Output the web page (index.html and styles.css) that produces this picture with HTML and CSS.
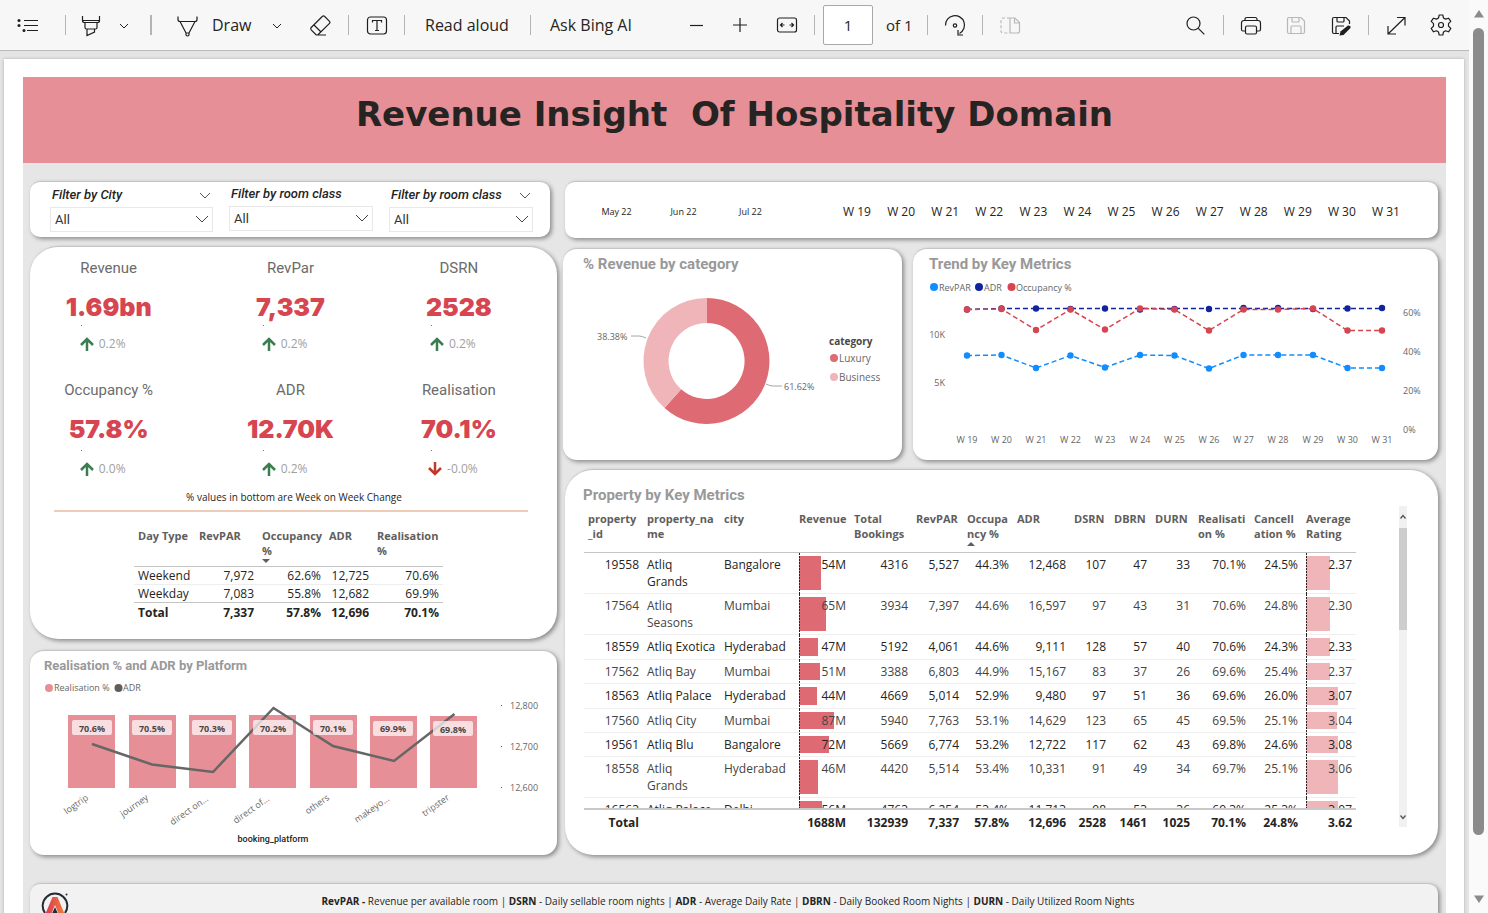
FILE: index.html
```html
<!DOCTYPE html>
<html lang="en">
<head>
<meta charset="utf-8">
<title>Revenue Insight Of Hospitality Domain</title>
<link rel="stylesheet" href="styles.css">
</head>
<body>
<div class="app">
<div class="viewer">
<header class="toolbar">
  <div class="tools">
    <button class="tool" aria-label="Contents"><svg viewBox="0 0 24 24"><path d="M8 7.500h14M8 12.500h14M11 17.500h11"/><g class="solid"><circle cx="3" cy="7.500" r="1.500"/><circle cx="3" cy="12.500" r="1.500"/><circle cx="8" cy="17.500" r="1.500"/></g></svg></button>
    <span class="sep g25"></span>
    <button class="tool g13" aria-label="Highlight"><svg viewBox="0 0 24 24"><path d="M3.500 3v4.500q0 2 2 2h13q2 0 2-2V3M3.500 7.500h17M6 10v4.500q0 1.500 1.500 1.500h9q1.500 0 1.500-1.500V10M8 16v6.500l7.500-3.500v-3"/></svg></button>
    <button class="tool small g15" aria-label="Highlight options"><svg viewBox="0 0 12 12"><path d="M2 5l4 4 4-4"/></svg></button>
    <span class="sep wide g20"></span>
    <button class="tool g23" aria-label="Pen"><svg viewBox="0 0 24 24"><path d="M3 3.500v3q0 2 2 2h15q2 0 2-2v-3M5 8.500l6 11.500h3l6-11.500M11 20v2q1.500 2 3 0v-2"/></svg></button>
    <button class="text-tool draw g13">Draw</button>
    <button class="tool small g19" aria-label="Draw options"><svg viewBox="0 0 12 12"><path d="M2 5l4 4 4-4"/></svg></button>
    <button class="tool g25" aria-label="Erase"><svg viewBox="0 0 24 24"><path d="M3.200 14.500L14.500 3.300q1-.8 2 0l5 5q1 1 0 2L10.200 21.500q-1.200 1-2.400 0l-4.600-4.600q-1-1.200 0-2.400zM6 12l7 7M9 22h9"/></svg></button>
    <span class="sep g16"></span>
    <button class="tool g16" aria-label="Add text"><svg viewBox="0 0 24 24"><rect x="2.500" y="4" width="19" height="17" rx="3"/><path d="M7.500 9.500V7.500h9v2M12 7.500v10M10 17.500h4"/></svg></button>
    <span class="sep g15"></span>
    <button class="text-tool read g20">Read aloud</button>
    <span class="sep g19"></span>
    <button class="text-tool ask g19">Ask Bing AI</button>
    <button class="tool g46" aria-label="Zoom out"><svg viewBox="0 0 24 24"><path d="M6 12.500h13"/></svg></button>
    <button class="tool g20" aria-label="Zoom in"><svg viewBox="0 0 24 24"><path d="M5 12h14M12 5v14"/></svg></button>
    <button class="tool g23" aria-label="Fit to width"><svg viewBox="0 0 24 24"><rect x="2.500" y="5" width="19" height="14" rx="2"/><path d="M9.500 12H5.500M7.500 10l-2 2 2 2M14.500 12h4M16.500 10l2 2-2 2"/></svg></button>
    <span class="sep g15"></span>
    <input class="page-input g8" type="text" value="1" aria-label="Page number">
    <span class="page-count g13">of 1</span>
    <span class="sep g15"></span>
    <button class="tool g15" aria-label="Rotate"><svg viewBox="0 0 24 24"><path d="M2.500 12.500a9.500 9.500 0 1 1 14 8M15 17v5h5"/><circle cx="12" cy="12.500" r="1.700"/></svg></button>
    <span class="sep g15"></span>
    <button class="tool muted g15" aria-label="Page view" disabled><svg viewBox="0 0 24 24"><path d="M12 5v15M12 5h5l4.500 4.500V18q0 2-2 2H12M16.500 5v5h5"/><path stroke-dasharray="3 2" d="M12 5H5Q3 5 3 7v11q0 2 2 2h7"/></svg></button>
  </div>
  <div class="tools">
    <button class="tool" aria-label="Find"><svg viewBox="0 0 24 24"><circle cx="10.500" cy="10.500" r="6.500"/><path d="M15.300 15.300l6 6"/></svg></button>
    <span class="sep g16"></span>
    <button class="tool g15" aria-label="Print"><svg viewBox="0 0 24 24"><path d="M7 18H4q-1.500 0-1.500-1.500V10q0-2.500 2.500-2.500h14q2.500 0 2.500 2.500v6.500Q21.500 18 20 18h-3M6 7.500V6.500q0-2 2-2h8q2 0 2 2v1"/><rect x="6.500" y="13" width="11" height="8" rx="1.500"/></svg></button>
    <button class="tool muted g21" aria-label="Save" disabled><svg viewBox="0 0 24 24"><path d="M3.500 6q0-1.500 1.500-1.500h12l3.500 3.500v11q0 1.500-1.500 1.500H5q-1.500 0-1.500-1.500zM8 4.500V8q0 1 1 1h5q1 0 1-1V4.500M7 20.500V14q0-1 1-1h8q1 0 1 1v6.500"/></svg></button>
    <button class="tool g21" aria-label="Save as"><svg viewBox="0 0 24 24"><path d="M10 20.500H5q-1.500 0-1.500-1.500V6q0-1.500 1.500-1.500h12l3.500 3.500v3M8 4.500V8q0 1 1 1h5q1 0 1-1V4.500M7 20.500V14q0-1 1-1h7"/><path class="solid" d="M10.500 22.500l1-4 7.500-6q3-.5 2.500 2.500l-7 7z"/></svg></button>
    <span class="sep g15"></span>
    <button class="tool g15" aria-label="Full screen"><svg viewBox="0 0 24 24"><path d="M4 21L21 4.500M13 4.500h8v8M4 13v8h8"/></svg></button>
    <button class="tool g21" aria-label="Settings"><svg viewBox="0 0 24 24"><path stroke-linejoin="round" d="M10.200 2h3.600l.7 3 2 1.100 3-.9 2.300 3.200-2.300 2.200v2.600l2.300 2.300-2.300 3.300-3-1-2 1.200-.7 3h-3.600l-.7-3-2-1.200-3 1-2.300-3.300 2.300-2.300v-2.600L2.200 8.400l2.300-3.200 3 .9 2-1.100z"/><circle cx="12" cy="12" r="2.500"/></svg></button>
  </div>
</header>

<div class="canvas">
<div class="page">
<main class="dashboard">
  <h1 class="banner">Revenue Insight&nbsp; Of Hospitality Domain</h1>
  <div class="board">
    <div class="column left">
      <section class="card filters">
        <div class="filter">
          <div class="filter-head"><label for="city">Filter by City</label><svg class="chev" viewBox="0 0 12 12"><path d="M1 4l5 5 5-5"/></svg></div>
          <div class="pick"><select id="city"><option>All</option></select><svg class="pick-chev" viewBox="0 0 14 14"><path d="M1 4l6 6 6-6"/></svg></div>
        </div>
        <div class="filter raised">
          <div class="filter-head"><label for="room1">Filter by room class</label></div>
          <div class="pick"><select id="room1"><option>All</option></select><svg class="pick-chev" viewBox="0 0 14 14"><path d="M1 4l6 6 6-6"/></svg></div>
        </div>
        <div class="filter">
          <div class="filter-head"><label for="room2">Filter by room class</label><svg class="chev" viewBox="0 0 12 12"><path d="M1 4l5 5 5-5"/></svg></div>
          <div class="pick"><select id="room2"><option>All</option></select><svg class="pick-chev" viewBox="0 0 14 14"><path d="M1 4l6 6 6-6"/></svg></div>
        </div>
      </section>

      <section class="card kpis">
        <div class="kpi-grid">
          <div class="kpi"><h3>Revenue</h3><strong>1.69bn</strong><i class="speck"></i><p class="change"><svg class="up" viewBox="0 0 14 14"><path d="M7 14V2M1 8l6-6 6 6"/></svg>0.2%</p></div>
          <div class="kpi"><h3>RevPar</h3><strong>7,337</strong><i class="speck"></i><p class="change"><svg class="up" viewBox="0 0 14 14"><path d="M7 14V2M1 8l6-6 6 6"/></svg>0.2%</p></div>
          <div class="kpi"><h3>DSRN</h3><strong>2528</strong><i class="speck"></i><p class="change"><svg class="up" viewBox="0 0 14 14"><path d="M7 14V2M1 8l6-6 6 6"/></svg>0.2%</p></div>
          <div class="kpi lower"><h3>Occupancy %</h3><strong>57.8%</strong><i class="speck"></i><p class="change"><svg class="up" viewBox="0 0 14 14"><path d="M7 14V2M1 8l6-6 6 6"/></svg>0.0%</p></div>
          <div class="kpi lower"><h3>ADR</h3><strong>12.70K</strong><i class="speck"></i><p class="change"><svg class="up" viewBox="0 0 14 14"><path d="M7 14V2M1 8l6-6 6 6"/></svg>0.2%</p></div>
          <div class="kpi lower"><h3>Realisation</h3><strong>70.1%</strong><i class="speck"></i><p class="change"><svg class="down" viewBox="0 0 14 14"><path d="M7 0v12M1 6l6 6 6-6"/></svg>-0.0%</p></div>
        </div>
        <p class="note">% values in bottom are Week on Week Change</p>
        <table class="day-table">
          <colgroup><col class="d1"><col class="d2"><col class="d3"><col class="d4"><col class="d5"></colgroup>
          <thead><tr><th>Day Type</th><th>RevPAR</th><th>Occupancy %<i class="sort-down"></i></th><th>ADR</th><th>Realisation %</th></tr></thead>
          <tbody>
            <tr><td>Weekend</td><td>7,972</td><td>62.6%</td><td>12,725</td><td>70.6%</td></tr>
            <tr><td>Weekday</td><td>7,083</td><td>55.8%</td><td>12,682</td><td>69.9%</td></tr>
          </tbody>
          <tfoot><tr><td>Total</td><td>7,337</td><td>57.8%</td><td>12,696</td><td>70.1%</td></tr></tfoot>
        </table>
      </section>

      <section class="card platform">
        <h2 class="minor">Realisation % and ADR by Platform</h2>
        <svg class="chart" viewBox="30 674 527 181" role="img" aria-label="Realisation % and ADR by Platform">
          <circle class="rose" cx="49" cy="688" r="4"/><text x="54" y="691">Realisation %</text>
          <circle class="slate" cx="118.500" cy="688" r="4"/><text x="123" y="691">ADR</text>
          <g class="rose">
            <rect x="68" y="715" width="47" height="73"/><rect x="129" y="715" width="47" height="73"/><rect x="189" y="715" width="47" height="73"/><rect x="249" y="715" width="47" height="73"/><rect x="310" y="715" width="47" height="73"/><rect x="370" y="716" width="47" height="72"/><rect x="430" y="716" width="47" height="72"/>
          </g>
          <polyline class="adr-line" points="92,744 152,764.500 213,772 273.500,708 333,746 394,761 454.500,714"/>
          <g class="tag">
            <rect x="72" y="720" width="40" height="15" rx="2"/><rect x="132" y="720" width="40" height="15" rx="2"/><rect x="192" y="720" width="40" height="15" rx="2"/><rect x="253" y="720" width="40" height="15" rx="2"/><rect x="313" y="720" width="40" height="15" rx="2"/><rect x="373" y="721" width="40" height="15" rx="2"/><rect x="433" y="721" width="40" height="15" rx="2"/>
          </g>
          <g class="tag-text mid">
            <text x="92" y="732">70.6%</text><text x="152" y="732">70.5%</text><text x="212" y="732">70.3%</text><text x="273" y="732">70.2%</text><text x="333" y="732">70.1%</text><text x="393" y="732">69.9%</text><text x="453" y="733">69.8%</text>
          </g>
          <g class="end">
            <text transform="translate(89 799) rotate(-35)">logtrip</text><text transform="translate(149 799) rotate(-35)">journey</text><text transform="translate(209 800) rotate(-35)">direct on...</text><text transform="translate(270 800) rotate(-35)">direct of...</text><text transform="translate(330 799) rotate(-35)">others</text><text transform="translate(390 800) rotate(-35)">makeyo...</text><text transform="translate(450 799) rotate(-35)">tripster</text>
          </g>
          <text x="510" y="709">12,800</text><text x="510" y="750">12,700</text><text x="510" y="791">12,600</text>
          <g class="slate"><rect x="501" y="705" width="1" height="1"/><rect x="501" y="746" width="1" height="1"/><rect x="501" y="787" width="1" height="1"/></g>
          <text class="axis-title mid" x="273" y="842">booking_platform</text>
        </svg>
      </section>
    </div>

    <div class="column right">
      <section class="card timeline">
        <div class="months"><button>May 22</button><button>Jun 22</button><button>Jul 22</button></div>
        <div class="weeks"><button>W 19</button><button>W 20</button><button>W 21</button><button>W 22</button><button>W 23</button><button>W 24</button><button>W 25</button><button>W 26</button><button>W 27</button><button>W 28</button><button>W 29</button><button>W 30</button><button>W 31</button></div>
      </section>

      <div class="charts">
        <section class="card category">
          <h2>% Revenue by category</h2>
          <svg class="chart" viewBox="563 272 339 188" role="img" aria-label="% Revenue by category">
            <path class="lux" d="M706.500 298A63 63 0 1 1 664.500 408L681.200 389.300A38 38 0 1 0 706.500 323z"/>
            <path class="biz" d="M664.500 408A63 63 0 0 1 706.500 298V323A38 38 0 0 0 681.200 389.300z"/>
            <path class="leader" d="M631 336h8q3 0 7 2M766 384q4 2 7 2h9"/>
            <text x="597" y="340">38.38%</text><text x="784" y="390">61.62%</text>
            <text class="legend-title" x="829" y="345">category</text>
            <circle class="lux" cx="834" cy="358" r="4"/><text class="legend" x="839" y="362">Luxury</text>
            <circle class="biz" cx="834" cy="377" r="4"/><text class="legend" x="839" y="381">Business</text>
          </svg>
        </section>

        <section class="card trend">
          <h2>Trend by Key Metrics</h2>
          <svg class="chart" viewBox="913 272 525 188" role="img" aria-label="Trend by Key Metrics">
            <circle class="sky" cx="934" cy="287" r="4"/><text x="939" y="291">RevPAR</text>
            <circle class="navy" cx="979" cy="287" r="4"/><text x="984" y="291">ADR</text>
            <circle class="red" cx="1011.500" cy="287" r="4"/><text x="1016" y="291">Occupancy %</text>
            <polyline class="dash sky-line" points="967,355.500 1001.500,355 1036,368 1070.500,355.500 1105,367.500 1140,355 1174.500,355.500 1209,368.500 1243.500,355 1278,355 1313,355 1347.500,368 1382,368"/>
            <g class="sky"><circle cx="967" cy="355.500" r="3.200"/><circle cx="1001.500" cy="355" r="3.200"/><circle cx="1036" cy="368" r="3.200"/><circle cx="1070.500" cy="355.500" r="3.200"/><circle cx="1105" cy="367.500" r="3.200"/><circle cx="1140" cy="355" r="3.200"/><circle cx="1174.500" cy="355.500" r="3.200"/><circle cx="1209" cy="368.500" r="3.200"/><circle cx="1243.500" cy="355" r="3.200"/><circle cx="1278" cy="355" r="3.200"/><circle cx="1313" cy="355" r="3.200"/><circle cx="1347.500" cy="368" r="3.200"/><circle cx="1382" cy="368" r="3.200"/></g>
            <polyline class="dash navy-line" points="967,309.500 1001.500,308.500 1382,308.500"/>
            <g class="navy"><circle cx="967" cy="309.500" r="3.200"/><circle cx="1001.500" cy="308.500" r="3.200"/><circle cx="1036" cy="308.500" r="3.200"/><circle cx="1070.500" cy="309" r="3.200"/><circle cx="1105" cy="308.500" r="3.200"/><circle cx="1140" cy="309.500" r="3.200"/><circle cx="1174.500" cy="309" r="3.200"/><circle cx="1209" cy="309" r="3.200"/><circle cx="1243.500" cy="308" r="3.200"/><circle cx="1278" cy="308" r="3.200"/><circle cx="1313" cy="309" r="3.200"/><circle cx="1347.500" cy="308.500" r="3.200"/><circle cx="1382" cy="308" r="3.200"/></g>
            <polyline class="dash red-line" points="967,309.500 1001.500,309 1036,330 1070.500,309.500 1105,329.500 1140,308.500 1174.500,309.500 1209,330.500 1243.500,309.500 1278,309.500 1313,308.500 1347.500,330.500 1382,330.500"/>
            <g class="red"><circle cx="967" cy="309.500" r="3.200"/><circle cx="1001.500" cy="309" r="3.200"/><circle cx="1036" cy="330" r="3.200"/><circle cx="1070.500" cy="309.500" r="3.200"/><circle cx="1105" cy="329.500" r="3.200"/><circle cx="1140" cy="308.500" r="3.200"/><circle cx="1174.500" cy="309.500" r="3.200"/><circle cx="1209" cy="330.500" r="3.200"/><circle cx="1243.500" cy="309.500" r="3.200"/><circle cx="1278" cy="309.500" r="3.200"/><circle cx="1313" cy="308.500" r="3.200"/><circle cx="1347.500" cy="330.500" r="3.200"/><circle cx="1382" cy="330.500" r="3.200"/></g>
            <g class="end"><text x="945" y="338">10K</text><text x="945" y="386">5K</text></g>
            <text x="1403" y="316">60%</text><text x="1403" y="355">40%</text><text x="1403" y="394">20%</text><text x="1403" y="433">0%</text>
            <g class="mid"><text x="967" y="443">W 19</text><text x="1001.500" y="443">W 20</text><text x="1036" y="443">W 21</text><text x="1070.500" y="443">W 22</text><text x="1105" y="443">W 23</text><text x="1140" y="443">W 24</text><text x="1174.500" y="443">W 25</text><text x="1209" y="443">W 26</text><text x="1243.500" y="443">W 27</text><text x="1278" y="443">W 28</text><text x="1313" y="443">W 29</text><text x="1347.500" y="443">W 30</text><text x="1382" y="443">W 31</text></g>
          </svg>
        </section>
      </div>

      <section class="card property">
        <h2>Property by Key Metrics</h2>
        <div class="property-body">
          <div class="table-view">
            <table class="property-table">
              <colgroup><col class="p-id"><col class="p-name"><col class="p-city"><col class="p-rev"><col class="p-book"><col class="p-par"><col class="p-occ"><col class="p-adr"><col class="p-dsrn"><col class="p-dbrn"><col class="p-durn"><col class="p-real"><col class="p-canc"><col class="p-rate"></colgroup>
              <thead><tr><th>property<br>_id</th><th>property_na<br>me</th><th>city</th><th>Revenue</th><th>Total Bookings</th><th>RevPAR</th><th>Occupa<br>ncy %<i class="sort-up"></i></th><th>ADR</th><th>DSRN</th><th>DBRN</th><th>DURN</th><th>Realisati<br>on %</th><th>Cancell<br>ation %</th><th>Average Rating</th></tr></thead>
              <tbody>
                <tr><td>19558</td><td>Atliq<br>Grands</td><td>Bangalore</td><td class="bar"><i style="width:22px"></i><span>54M</span></td><td>4316</td><td>5,527</td><td>44.3%</td><td>12,468</td><td>107</td><td>47</td><td>33</td><td>70.1%</td><td>24.5%</td><td class="bar pale"><i style="width:24px"></i><span>2.37</span></td></tr>
                <tr><td>17564</td><td>Atliq<br>Seasons</td><td>Mumbai</td><td class="bar"><i style="width:27px"></i><span>65M</span></td><td>3934</td><td>7,397</td><td>44.6%</td><td>16,597</td><td>97</td><td>43</td><td>31</td><td>70.6%</td><td>24.8%</td><td class="bar pale"><i style="width:24px"></i><span>2.30</span></td></tr>
                <tr class="roomy"><td>18559</td><td>Atliq Exotica</td><td>Hyderabad</td><td class="bar"><i style="width:19px"></i><span>47M</span></td><td>5192</td><td>4,061</td><td>44.6%</td><td>9,111</td><td>128</td><td>57</td><td>40</td><td>70.6%</td><td>24.3%</td><td class="bar pale"><i style="width:24px"></i><span>2.33</span></td></tr>
                <tr><td>17562</td><td>Atliq Bay</td><td>Mumbai</td><td class="bar"><i style="width:21px"></i><span>51M</span></td><td>3388</td><td>6,803</td><td>44.9%</td><td>15,167</td><td>83</td><td>37</td><td>26</td><td>69.6%</td><td>25.4%</td><td class="bar pale"><i style="width:24px"></i><span>2.37</span></td></tr>
                <tr class="roomy"><td>18563</td><td>Atliq Palace</td><td>Hyderabad</td><td class="bar"><i style="width:18px"></i><span>44M</span></td><td>4669</td><td>5,014</td><td>52.9%</td><td>9,480</td><td>97</td><td>51</td><td>36</td><td>69.6%</td><td>26.0%</td><td class="bar pale"><i style="width:32px"></i><span>3.07</span></td></tr>
                <tr><td>17560</td><td>Atliq City</td><td>Mumbai</td><td class="bar"><i style="width:35px"></i><span>87M</span></td><td>5940</td><td>7,763</td><td>53.1%</td><td>14,629</td><td>123</td><td>65</td><td>45</td><td>69.5%</td><td>25.1%</td><td class="bar pale"><i style="width:31px"></i><span>3.04</span></td></tr>
                <tr><td>19561</td><td>Atliq Blu</td><td>Bangalore</td><td class="bar"><i style="width:30px"></i><span>72M</span></td><td>5669</td><td>6,774</td><td>53.2%</td><td>12,722</td><td>117</td><td>62</td><td>43</td><td>69.8%</td><td>24.6%</td><td class="bar pale"><i style="width:32px"></i><span>3.08</span></td></tr>
                <tr><td>18558</td><td>Atliq<br>Grands</td><td>Hyderabad</td><td class="bar"><i style="width:19px"></i><span>46M</span></td><td>4420</td><td>5,514</td><td>53.4%</td><td>10,331</td><td>91</td><td>49</td><td>34</td><td>69.7%</td><td>25.1%</td><td class="bar pale"><i style="width:32px"></i><span>3.06</span></td></tr>
                <tr><td>16563</td><td>Atliq Palace</td><td>Delhi</td><td class="bar"><i style="width:23px"></i><span>56M</span></td><td>4763</td><td>6,254</td><td>53.4%</td><td>11,713</td><td>98</td><td>53</td><td>36</td><td>69.3%</td><td>25.3%</td><td class="bar pale"><i style="width:32px"></i><span>3.07</span></td></tr>
              </tbody>
              <tfoot><tr><td>Total</td><td></td><td></td><td>1688M</td><td>132939</td><td>7,337</td><td>57.8%</td><td>12,696</td><td>2528</td><td>1461</td><td>1025</td><td>70.1%</td><td>24.8%</td><td>3.62</td></tr></tfoot>
            </table>
          </div>
          <div class="table-scroll">
            <svg viewBox="0 0 8 8"><path d="M1.500 5.500L4 2.500l2.500 3"/></svg>
            <span class="table-thumb"></span>
            <svg class="last" viewBox="0 0 8 8"><path d="M1.500 2.500L4 5.500l2.500-3"/></svg>
          </div>
        </div>
      </section>
    </div>
  </div>

  <footer class="card legend-bar">
    <svg class="logo" viewBox="0 0 30 30"><defs><linearGradient id="lg" x1="0" x2="1"><stop offset="0" stop-color="#d93654"/><stop offset="1" stop-color="#f0803a"/></linearGradient></defs><path class="ring" d="M4 22A12.300 12.300 0 1 1 24 22"/><path fill="url(#lg)" d="M11.500 6h5l8 19h-6L14 14 9.500 25h-6z"/><path class="core" d="M14 16l4 9h-8z"/><circle class="reg" cx="25.500" cy="3.500" r="1"/></svg>
    <p><b>RevPAR -</b> Revenue per available room | <b>DSRN</b> - Daily sellable room nights | <b>ADR</b> - Average Daily Rate | <b>DBRN</b> - Daily Booked Room Nights | <b>DURN</b> - Daily Utilized Room Nights</p>
  </footer>
</main>
</div>
</div>
</div>
<div class="scrollbar">
  <svg viewBox="0 0 12 10"><path d="M6 1l5 7.500H1z"/></svg>
  <span class="thumb"></span>
  <svg viewBox="0 0 12 10"><path d="M1 1.500h10L6 9z"/></svg>
</div>
</div>
</body>
</html>
```

FILE: styles.css
```css
* { box-sizing: border-box; }
body { margin: 0; font-family: "Open Sans", "Noto Sans", sans-serif; color: #252423; background: #e6e6e6; }
h1, h2, h3, p { margin: 0; }
button, input, select { font: inherit; color: inherit; }
button { border: 0; padding: 0; background: none; }

.app { display: flex; height: 100vh; overflow: hidden; }
.viewer { flex: 1; min-width: 0; display: flex; flex-direction: column; }

/* toolbar */
.toolbar { flex: none; display: flex; justify-content: space-between; height: 51px; padding: 0 16px; background: #f7f7f7; border-bottom: 1px solid #b9b9b9; }
.tools { display: flex; align-items: center; }
.tool { flex: none; width: 24px; height: 24px; }
.tool svg { display: block; width: 100%; height: 100%; fill: none; stroke: #1f1f1f; stroke-width: 1.200; }
.tool .solid { fill: #1f1f1f; stroke: none; }
.tool.small { width: 12px; height: 12px; }
.tool.small svg { stroke-width: 1; }
.tool.muted svg { stroke: #b8b8b8; }
.sep { flex: none; width: 1px; height: 20px; background: #b4b4b4; }
.sep.wide { width: 2px; }
.text-tool, .page-count { flex: none; font-size: 16px; white-space: nowrap; text-align: left; }
.draw { width: 40px; }
.read { width: 86px; }
.ask { width: 88px; }
.page-count { width: 26px; font-size: 15px; }
.page-input { width: 50px; height: 40px; padding: 0; text-align: center; font-size: 15px; background: #fff; border: 1px solid #a8a8a8; border-radius: 2px; }
.g8 { margin-left: 8px; }
.g13 { margin-left: 13px; }
.g15 { margin-left: 15px; }
.g16 { margin-left: 16px; }
.g19 { margin-left: 19px; }
.g20 { margin-left: 20px; }
.g21 { margin-left: 21px; }
.g23 { margin-left: 23px; }
.g25 { margin-left: 25px; }
.g46 { margin-left: 46px; }

/* document */
.canvas { flex: 1; min-height: 0; overflow: hidden; padding: 8px 5px 0 4px; background: #e4e4e4; }
.page { min-height: 100%; padding: 18px 18px 0 19px; background: #fff; box-shadow: 0 0 3px #b0b0b0; }
.dashboard { background: #e6e6e6; }
.banner { height: 86px; padding-top: 16px; background: #e68f96; font: bold 34px/42px "DejaVu Sans", Verdana, sans-serif; text-align: center; color: #252423; }
.board { display: grid; grid-template-columns: 527fr 875fr; gap: 6px; padding: 18px 8px 0 7px; }
.column { display: flex; flex-direction: column; min-width: 0; }
.card { background: #fff; border-radius: 10px; border-top: 1px solid #c4c4c4; box-shadow: 2px 2px 4px #8c8c8c; }
.card h2 { font: 700 15px/16px Roboto, sans-serif; color: #999; }
.card h2.minor { font-size: 13px; }

/* filters */
.filters { display: grid; grid-template-columns: 163fr 144fr 144fr; gap: 16px; margin-right: 7px; padding: 5px 17px 5px 20px; }
.filter { padding-top: 1px; }
.filter.raised { padding: 0; }
.filter-head { display: flex; align-items: center; justify-content: space-between; height: 14px; padding: 0 2px; font: italic 500 13px/14px Roboto, sans-serif; }
.chev { width: 12px; height: 12px; fill: none; stroke: #555; stroke-width: 1; }
.pick { position: relative; margin-top: 5px; }
.pick select { display: block; width: 100%; height: 25px; padding: 0 4px; appearance: none; border: 1px solid #e8e8e8; border-radius: 0; background: #fff; font: 13px/20px Roboto, sans-serif; color: #333; }
.pick-chev { position: absolute; right: 4px; top: 5px; width: 14px; height: 14px; fill: none; stroke: #444; stroke-width: 1; pointer-events: none; }

/* headline numbers */
.kpis { margin-top: 9px; padding: 13px 29px 18px 0; border-radius: 28px; }
.kpi-grid { display: grid; grid-template-columns: 157fr 206fr 130fr; row-gap: 28px; padding-right: 4px; }
.kpi { display: flex; flex-direction: column; align-items: center; }
.kpi h3 { font: 400 15px/16px Roboto, sans-serif; color: #6b6b6b; }
.kpi strong { margin-top: 17px; font: 900 25px/28px Inter, "Liberation Sans", sans-serif; color: #d64550; }
.speck { width: 1px; height: 1px; margin: 4px 54px 0 0; background: #777; }
.lower .speck { margin-top: 7px; }
.change { display: flex; align-items: center; gap: 5px; margin: 8px 12px 0 0; font-size: 12px; line-height: 20px; color: #a0a0a0; }
.change svg { width: 14px; height: 14px; fill: none; stroke-width: 2.500; }
.up { stroke: #3a7d4f; }
.down { stroke: #c0392b; }
.note { margin: 11px 0 0 24px; padding: 0 0 6px 6px; border-bottom: 2px solid #f0cdb9; font-size: 10px; line-height: 14px; text-align: center; }

table { border-collapse: separate; border-spacing: 0; table-layout: fixed; }
th, td { padding: 0 4px; vertical-align: top; }
th { font-size: 11px; line-height: 15px; text-align: left; color: #605e5c; }
td { font-size: 12px; line-height: 17px; text-align: right; }
.day-table { width: 309px; margin: 16px 0 0 104px; }
.d1 { width: 61px; }
.d2 { width: 63px; }
.d3 { width: 67px; }
.d4 { width: 48px; }
.d5 { width: 70px; }
.day-table th { height: 39px; border-bottom: 1px solid #c4c4c4; }
.day-table td:first-child { text-align: left; }
.day-table td { border-bottom: 1px solid #eee; }
.day-table tbody tr:last-child td { border-bottom-color: #c4c4c4; }
.day-table tfoot td { padding-top: 1px; border: 0; font-weight: 700; }
.sort-down, .sort-up { display: block; width: 0; border: 4px solid transparent; }
.sort-down { border-top-color: #605e5c; border-bottom: 0; margin-top: 1px; }
.sort-up { border-bottom-color: #605e5c; border-top: 0; margin-top: 1px; }

/* charts */
.chart { display: block; width: 100%; height: auto; font-size: 9px; fill: #666; }
.mid { text-anchor: middle; }
.end { text-anchor: end; }
.rose { fill: #e68f96; }
.slate { fill: #605e5c; }
.lux { fill: #de6a73; }
.biz { fill: #efb5b9; }
.sky { fill: #118dff; }
.navy { fill: #12239e; }
.red { fill: #d64550; }
.adr-line { fill: none; stroke: #666; stroke-width: 2.500; }
.tag { fill: #fff; fill-opacity: .7; }
.tag-text { font-weight: 700; fill: #4a4846; }
.axis-title { font: 500 9px Roboto, sans-serif; fill: #252423; }
.leader { fill: none; stroke: #a6a6a6; }
.legend { font-size: 10px; }
.legend-title { font-size: 10px; font-weight: 700; fill: #4a4846; }
.dash { fill: none; stroke-width: 1.500; stroke-dasharray: 5 3; }
.sky-line { stroke: #118dff; }
.navy-line { stroke: #12239e; }
.red-line { stroke: #d64550; }
.platform { margin-top: 11px; padding-top: 7px; border-radius: 14px; }
.platform h2 { padding-left: 14px; }

/* period slicers */
.timeline { display: grid; grid-template-columns: 201fr 573fr; gap: 51px; margin-left: 2px; padding: 22px 30px 18px 18px; font-size: 12px; line-height: 16px; }
.months, .weeks { display: grid; grid-auto-flow: column; grid-auto-columns: 1fr; }
.months { font-size: 9px; }
.charts { display: grid; grid-template-columns: 339fr 525fr; gap: 11px; margin-top: 10px; }
.charts .card { padding-top: 7px; border-radius: 14px; }
.category h2 { padding-left: 20px; }
.trend h2 { padding-left: 16px; }

/* property table */
.property { margin: 9px 0 0 2px; padding: 17px 31px 23px 18px; border-radius: 28px; }
.property-body { display: flex; gap: 43px; margin-top: 3px; padding-left: 1px; }
.table-view { flex: 1; min-width: 0; max-height: 326px; padding-top: 5px; overflow: hidden; }
.property-table { width: 100%; }
.p-id { width: 59px; } .p-name { width: 77px; } .p-city { width: 75px; } .p-rev { width: 55px; }
.p-book { width: 62px; } .p-par { width: 51px; } .p-occ { width: 50px; } .p-adr { width: 57px; }
.p-dsrn { width: 40px; } .p-dbrn { width: 41px; } .p-durn { width: 43px; } .p-real { width: 56px; }
.p-canc { width: 52px; } .p-rate { width: 54px; }
.property-table th { height: 42px; border-bottom: 1px solid #c4c4c4; white-space: nowrap; }
.property-table th:nth-child(5), .property-table th:last-child { white-space: normal; }
.property-table td { padding-top: 3px; padding-bottom: 3px; border-bottom: 1px solid #eee; white-space: nowrap; }
.property-table .roomy td { padding-bottom: 4px; }
.property-table tr:nth-child(even) td { color: #444; }
.property-table td:nth-child(2), .property-table td:nth-child(3) { text-align: left; }
.property-table .bar { position: relative; }
.bar::after { content: ""; position: absolute; left: 4px; top: 0; bottom: -1px; width: 1px; background: repeating-linear-gradient(#252423 0 2px, transparent 2px 3px); }
.bar i { position: absolute; left: 4px; top: 3px; bottom: 3px; background: #de6a73; }
.bar.pale i { background: #efb5b9; }
.bar span { position: relative; }
.property-table tfoot td { position: sticky; bottom: 0; z-index: 1; padding-top: 4px; padding-bottom: 1px; background: #fff; border-top: 2px solid #c8c8c8; border-bottom: 0; font-weight: 700; }
.table-scroll { display: flex; flex-direction: column; align-items: center; width: 8px; height: 321px; padding: 7px 0 6px; background: #f1f1f1; }
.table-scroll svg { width: 8px; height: 8px; fill: none; stroke: #505050; stroke-width: 1.200; }
.table-scroll .last { margin-top: auto; }
.table-thumb { width: 8px; height: 102px; margin-top: 7px; background: #cdcdcd; }

/* footer */
.legend-bar { position: relative; margin: 28px 8px 0 7px; padding: 10px 12px 20px 0; background: #f2f2f2; font-size: 10px; line-height: 15px; text-align: center; }
.logo { position: absolute; left: 11px; top: 7px; width: 30px; height: 30px; }
.ring { fill: none; stroke: #252a33; stroke-width: 2; }
.core, .reg { fill: #252a33; }

/* window scrollbar */
.scrollbar { display: flex; flex-direction: column; align-items: center; justify-content: space-between; flex: none; width: 19px; padding: 9px 0; background: #fafafa; }
.scrollbar svg { flex: none; width: 12px; height: 10px; fill: #8b8b8b; }
.thumb { width: 11px; flex: 0 1 807px; margin: 9px 0 auto; border-radius: 6px; background: #8b8b8b; }
```
